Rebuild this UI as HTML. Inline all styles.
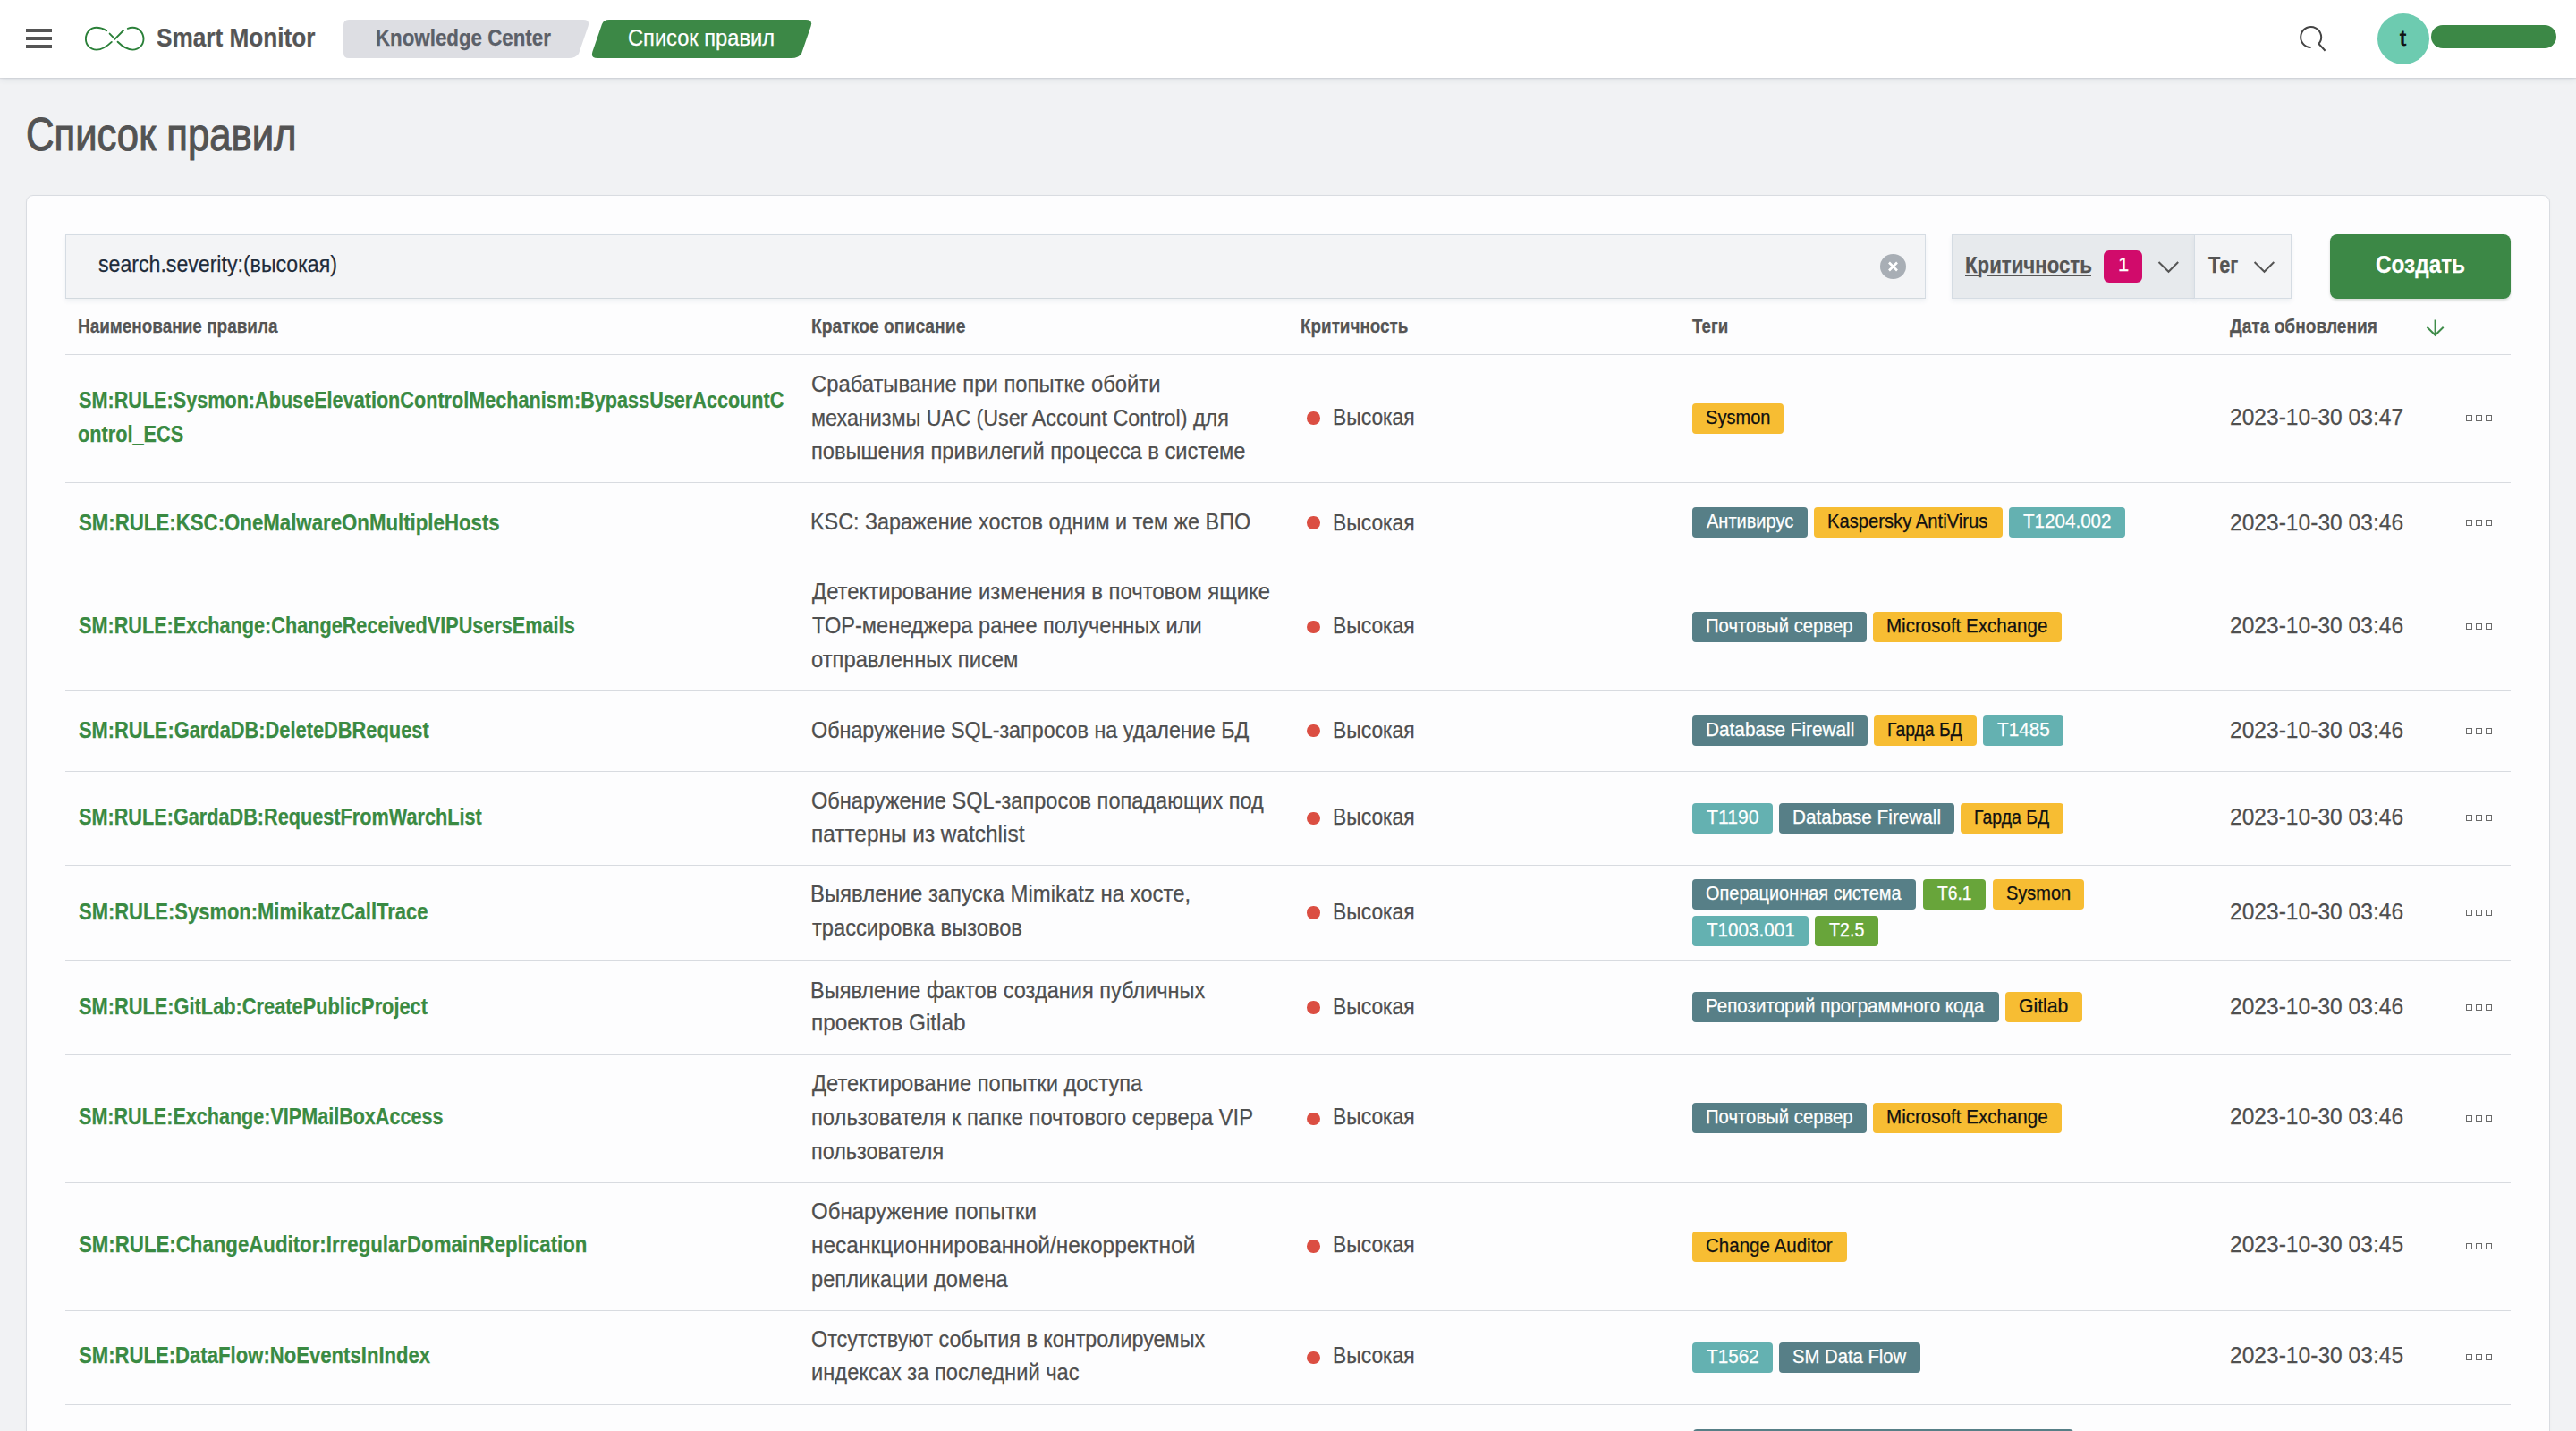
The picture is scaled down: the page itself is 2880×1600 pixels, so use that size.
<!DOCTYPE html>
<html><head><meta charset="utf-8"><title>Список правил</title>
<style>
html,body{margin:0;padding:0;}
body{width:2880px;height:1600px;overflow:hidden;position:relative;background:#f1f2f4;font-family:"Liberation Sans",sans-serif;}
.t{position:absolute;white-space:nowrap;line-height:1;transform-origin:0 0;-webkit-text-stroke:0.25px currentColor;}
.hdr{position:absolute;left:0;top:0;width:2880px;height:87px;background:#fff;box-shadow:0 1px 1px rgba(50,60,80,0.09), 0 2px 6px rgba(60,80,100,0.12);}
.card{position:absolute;left:29px;top:218px;width:2820px;height:1500px;background:#fdfdfe;border:1px solid #d9dce1;border-radius:8px;box-shadow:0 1px 3px rgba(0,0,0,0.03);}
.hl{position:absolute;left:73px;width:2734px;height:1px;background:#d8dbe0;}
.tag{position:absolute;height:34px;border-radius:4px;}
.dot{position:absolute;left:1461px;width:14.5px;height:14.5px;border-radius:50%;background:#db4e42;}
.sq{position:absolute;box-sizing:border-box;width:7px;height:7px;border:1.8px solid #6a6a6a;}
</style></head><body>
<div class="hdr"></div>
<div style="position:absolute;left:29px;top:32px;width:29px;height:4px;background:#555"></div>
<div style="position:absolute;left:29px;top:41px;width:29px;height:4px;background:#555"></div>
<div style="position:absolute;left:29px;top:50px;width:29px;height:4px;background:#555"></div>
<svg style="position:absolute;left:90px;top:25px" width="80" height="37" viewBox="0 0 80 37">
 <g fill="none" stroke="#2b8039" stroke-width="1.9" stroke-linecap="round">
  <path d="M29.2,9.3 C25,6.6 21.5,5.7 18,5.7 C11,5.7 5.9,11.5 5.9,18.6 C5.9,25.5 11,30.6 18,30.6 C25,30.6 30,26.5 34.8,21.9"/>
  <path d="M52.8,6.8 C54.8,6 56.5,5.7 58.4,5.7 C65,5.7 70.5,11.5 70.5,18.6 C70.5,25.5 65,30.6 58.4,30.6 C52,30.6 47.5,27.5 41.6,21.7"/>
  <path d="M32.6,12.6 L38.5,18.6 L48,9"/>
 </g>
</svg>
<svg style="position:absolute;left:370px;top:10px" width="560" height="70" viewBox="0 0 560 70">
 <path d="M20,12 H282 Q290,12 287.5,19.5 L277,50 Q273.5,55 266,55 H20 Q14,55 14,49 V18 Q14,12 20,12 Z" fill="#dddee3"/>
 <path d="M311,12 H531 Q539,12 536.5,19.5 L526,50 Q522.5,55 515,55 H298 Q290,55 292.5,47.5 L303,17 Q305,12 311,12 Z" fill="#3c8846"/>
</svg>
<svg style="position:absolute;left:2560px;top:20px" width="50" height="50" viewBox="0 0 50 50">
 <path d="M23.6,33.0 A11.5,11.5 0 1 1 32.4,29.0 L39.6,36.8" fill="none" stroke="#444" stroke-width="2"/>
</svg>
<div style="position:absolute;left:2658px;top:15px;width:58px;height:57px;border-radius:50%;background:#6dcbb0"></div>
<div style="position:absolute;left:2718px;top:28px;width:140px;height:26px;border-radius:13px;background:#3c8846"></div>
<div class="card"></div>
<div style="position:absolute;left:73px;top:262px;width:2078px;height:70px;background:#f3f4f6;border:1px solid #d5dce3;border-bottom-color:#d2d9de;box-shadow:0 3px 5px rgba(60,90,110,0.07)"></div>
<div style="position:absolute;left:2102px;top:284px;width:29px;height:28px;border-radius:50%;background:#a8aeb5"></div>
<svg style="position:absolute;left:2102px;top:284px" width="29" height="28" viewBox="0 0 29 28"><path d="M10,9.5 L19,18.5 M19,9.5 L10,18.5" stroke="#fff" stroke-width="2.6"/></svg>
<div style="position:absolute;left:2182px;top:262px;width:271px;height:70px;background:#e7eaed;border:1px solid #d5dce3;border-right:none;box-shadow:0 3px 5px rgba(60,90,110,0.07)"></div>
<div style="position:absolute;left:2453px;top:262px;width:107px;height:70px;background:#f3f4f6;border:1px solid #d5dce3;box-shadow:0 3px 5px rgba(60,90,110,0.07)"></div>
<div style="position:absolute;left:2197.4px;top:307px;width:14.4px;height:2px;background:#555"></div><div style="position:absolute;left:2220.5px;top:307px;width:117px;height:2px;background:#555"></div>
<div style="position:absolute;left:2352px;top:280px;width:43px;height:36px;border-radius:6px;background:#d10b6b"></div>
<svg style="position:absolute;left:2410px;top:288px" width="140" height="20" viewBox="0 0 140 20"><path d="M3.5,5 L14.5,15.8 L25.2,5 M110.6,5 L121.5,15.8 L132.3,5" fill="none" stroke="#555" stroke-width="2"/></svg>
<div style="position:absolute;left:2605px;top:262px;width:202px;height:72px;border-radius:8px;background:#3c8846;box-shadow:0 2px 3px rgba(0,40,0,0.15)"></div>
<svg style="position:absolute;left:2705px;top:352px" width="36" height="30" viewBox="0 0 36 30"><path d="M17.6,5.5 V22.8 M8.5,13.8 L17.6,22.8 L26.7,13.8" fill="none" stroke="#3f8c4a" stroke-width="2"/></svg>
<div class="hl" style="top:395.5px"></div><div class="hl" style="top:538.7px"></div><div class="hl" style="top:629.0px"></div><div class="hl" style="top:771.7px"></div><div class="hl" style="top:861.7px"></div><div class="hl" style="top:966.9px"></div><div class="hl" style="top:1072.9px"></div><div class="hl" style="top:1178.9px"></div><div class="hl" style="top:1321.8px"></div><div class="hl" style="top:1464.6px"></div><div class="hl" style="top:1569.9px"></div>
<div class="tag" style="left:1892.1px;top:451.1px;width:101.9px;background:#f7bd33"></div><div class="tag" style="left:1892.0px;top:567.2px;width:128.7px;background:#577f87"></div><div class="tag" style="left:2028.0px;top:567.2px;width:211.0px;background:#f7bd33"></div><div class="tag" style="left:2246.0px;top:567.2px;width:129.8px;background:#64b1b1"></div><div class="tag" style="left:1892.1px;top:684.1px;width:194.8px;background:#577f87"></div><div class="tag" style="left:2094.2px;top:684.1px;width:210.7px;background:#f7bd33"></div><div class="tag" style="left:1892.0px;top:800.2px;width:196.0px;background:#577f87"></div><div class="tag" style="left:2095.2px;top:800.2px;width:114.6px;background:#f7bd33"></div><div class="tag" style="left:2217.0px;top:800.2px;width:90.0px;background:#64b1b1"></div><div class="tag" style="left:1892.1px;top:898.2px;width:89.9px;background:#64b1b1"></div><div class="tag" style="left:1989.0px;top:898.2px;width:195.8px;background:#577f87"></div><div class="tag" style="left:2192.0px;top:898.2px;width:115.0px;background:#f7bd33"></div><div class="tag" style="left:1892.0px;top:983.4px;width:249.8px;background:#577f87"></div><div class="tag" style="left:2150.0px;top:983.4px;width:69.7px;background:#68a53a"></div><div class="tag" style="left:2228.0px;top:983.4px;width:101.7px;background:#f7bd33"></div><div class="tag" style="left:1892.0px;top:1024.3px;width:130.0px;background:#64b1b1"></div><div class="tag" style="left:2029.0px;top:1024.3px;width:70.6px;background:#68a53a"></div><div class="tag" style="left:1892.0px;top:1109.1px;width:342.7px;background:#577f87"></div><div class="tag" style="left:2242.0px;top:1109.1px;width:85.7px;background:#f7bd33"></div><div class="tag" style="left:1892.0px;top:1233.2px;width:195.0px;background:#577f87"></div><div class="tag" style="left:2094.0px;top:1233.2px;width:211.0px;background:#f7bd33"></div><div class="tag" style="left:1892.0px;top:1377.2px;width:173.0px;background:#f7bd33"></div><div class="tag" style="left:1892.0px;top:1501.3px;width:90.0px;background:#64b1b1"></div><div class="tag" style="left:1989.0px;top:1501.3px;width:157.9px;background:#577f87"></div><div class="tag" style="left:1893px;top:1598px;width:425px;background:#577f87"></div>
<div class="dot" style="top:460.3px"></div><div class="sq" style="left:2757px;top:464.1px"></div><div class="sq" style="left:2768px;top:464.1px"></div><div class="sq" style="left:2778.5px;top:464.1px"></div><div class="dot" style="top:577.1px"></div><div class="sq" style="left:2757px;top:580.9px"></div><div class="sq" style="left:2768px;top:580.9px"></div><div class="sq" style="left:2778.5px;top:580.9px"></div><div class="dot" style="top:693.6px"></div><div class="sq" style="left:2757px;top:697.4px"></div><div class="sq" style="left:2768px;top:697.4px"></div><div class="sq" style="left:2778.5px;top:697.4px"></div><div class="dot" style="top:809.9px"></div><div class="sq" style="left:2757px;top:813.7px"></div><div class="sq" style="left:2768px;top:813.7px"></div><div class="sq" style="left:2778.5px;top:813.7px"></div><div class="dot" style="top:907.5px"></div><div class="sq" style="left:2757px;top:911.3px"></div><div class="sq" style="left:2768px;top:911.3px"></div><div class="sq" style="left:2778.5px;top:911.3px"></div><div class="dot" style="top:1013.1px"></div><div class="sq" style="left:2757px;top:1016.9px"></div><div class="sq" style="left:2768px;top:1016.9px"></div><div class="sq" style="left:2778.5px;top:1016.9px"></div><div class="dot" style="top:1119.1px"></div><div class="sq" style="left:2757px;top:1122.9px"></div><div class="sq" style="left:2768px;top:1122.9px"></div><div class="sq" style="left:2778.5px;top:1122.9px"></div><div class="dot" style="top:1243.5px"></div><div class="sq" style="left:2757px;top:1247.3px"></div><div class="sq" style="left:2768px;top:1247.3px"></div><div class="sq" style="left:2778.5px;top:1247.3px"></div><div class="dot" style="top:1386.4px"></div><div class="sq" style="left:2757px;top:1390.2px"></div><div class="sq" style="left:2768px;top:1390.2px"></div><div class="sq" style="left:2778.5px;top:1390.2px"></div><div class="dot" style="top:1510.5px"></div><div class="sq" style="left:2757px;top:1514.2px"></div><div class="sq" style="left:2768px;top:1514.2px"></div><div class="sq" style="left:2778.5px;top:1514.2px"></div>
<div class="t" style="left:175.00px;top:26.61px;font-size:30px;color:#555555;transform:scaleX(0.8730);font-weight:700;">Smart Monitor</div><div class="t" style="left:419.74px;top:28.99px;font-size:26px;color:#5b6069;transform:scaleX(0.8581);font-weight:700;">Knowledge Center</div><div class="t" style="left:702.09px;top:28.59px;font-size:26px;color:#ffffff;transform:scaleX(0.9098);">Список правил</div><div class="t" style="left:28.82px;top:124.28px;font-size:52px;color:#535353;transform:scaleX(0.8394);-webkit-text-stroke:1.1px #535353;">Список правил</div><div class="t" style="left:109.70px;top:282.39px;font-size:26px;color:#1f2c3b;transform:scaleX(0.8893);">search.severity:(высокая)</div><div class="t" style="left:2196.55px;top:282.99px;font-size:26px;color:#555555;transform:scaleX(0.8550);font-weight:700;">Критичность</div><div class="t" style="left:2469.20px;top:282.99px;font-size:26px;color:#555555;transform:scaleX(0.8365);font-weight:700;">Тег</div><div class="t" style="left:2656.13px;top:282.30px;font-size:28px;color:#ffffff;transform:scaleX(0.8689);font-weight:700;">Создать</div><div class="t" style="left:2368.00px;top:285.38px;font-size:22px;color:#ffffff;transform:scaleX(1.0000);">1</div><div class="t" style="left:2682.50px;top:30.68px;font-size:24px;color:#111111;transform:scaleX(1.0500);-webkit-text-stroke:0.8px #111;">t</div><div class="t" style="left:87.24px;top:354.08px;font-size:22px;color:#555555;transform:scaleX(0.8605);font-weight:700;">Наименование правила</div><div class="t" style="left:907.02px;top:354.08px;font-size:22px;color:#555555;transform:scaleX(0.8776);font-weight:700;">Краткое описание</div><div class="t" style="left:1454.14px;top:354.08px;font-size:22px;color:#555555;transform:scaleX(0.8574);font-weight:700;">Критичность</div><div class="t" style="left:1892.20px;top:354.08px;font-size:22px;color:#555555;transform:scaleX(0.8504);font-weight:700;">Теги</div><div class="t" style="left:2493.00px;top:354.08px;font-size:22px;color:#555555;transform:scaleX(0.8705);font-weight:700;">Дата обновления</div><div class="t" style="left:87.70px;top:434.49px;font-size:26px;color:#3a8a42;transform:scaleX(0.8319);font-weight:700;">SM:RULE:Sysmon:AbuseElevationControlMechanism:BypassUserAccountC</div><div class="t" style="left:86.87px;top:471.79px;font-size:26px;color:#3a8a42;transform:scaleX(0.8350);font-weight:700;">ontrol_ECS</div><div class="t" style="left:906.88px;top:415.69px;font-size:26px;color:#4f4f4f;transform:scaleX(0.9153);">Срабатывание при попытке обойти</div><div class="t" style="left:906.90px;top:453.99px;font-size:26px;color:#4f4f4f;transform:scaleX(0.8972);">механизмы UAC (User Account Control) для</div><div class="t" style="left:906.89px;top:490.99px;font-size:26px;color:#4f4f4f;transform:scaleX(0.9109);">повышения привилегий процесса в системе</div><div class="t" style="left:1490.24px;top:453.09px;font-size:26px;color:#4f4f4f;transform:scaleX(0.8796);">Высокая</div><div class="t" style="left:2493.05px;top:453.09px;font-size:26px;color:#4f4f4f;transform:scaleX(0.9454);">2023-10-30 03:47</div><div class="t" style="left:1906.99px;top:455.68px;font-size:22px;color:#111111;transform:scaleX(0.9115);">Sysmon</div><div class="t" style="left:87.70px;top:570.99px;font-size:26px;color:#3a8a42;transform:scaleX(0.8552);font-weight:700;">SM:RULE:KSC:OneMalwareOnMultipleHosts</div><div class="t" style="left:906.00px;top:569.99px;font-size:26px;color:#4f4f4f;transform:scaleX(0.8980);">KSC: Заражение хостов одним и тем же ВПО</div><div class="t" style="left:1490.24px;top:570.69px;font-size:26px;color:#4f4f4f;transform:scaleX(0.8796);">Высокая</div><div class="t" style="left:2493.05px;top:570.69px;font-size:26px;color:#4f4f4f;transform:scaleX(0.9454);">2023-10-30 03:46</div><div class="t" style="left:1907.80px;top:571.78px;font-size:22px;color:#ffffff;transform:scaleX(0.9092);">Антивирус</div><div class="t" style="left:2042.88px;top:571.78px;font-size:22px;color:#111111;transform:scaleX(0.9184);">Kaspersky AntiVirus</div><div class="t" style="left:2261.80px;top:571.78px;font-size:22px;color:#ffffff;transform:scaleX(0.9365);">T1204.002</div><div class="t" style="left:87.70px;top:685.99px;font-size:26px;color:#3a8a42;transform:scaleX(0.8327);font-weight:700;">SM:RULE:Exchange:ChangeReceivedVIPUsersEmails</div><div class="t" style="left:907.80px;top:648.09px;font-size:26px;color:#4f4f4f;transform:scaleX(0.9169);">Детектирование изменения в почтовом ящике</div><div class="t" style="left:907.80px;top:685.59px;font-size:26px;color:#4f4f4f;transform:scaleX(0.9060);">TOP-менеджера ранее полученных или</div><div class="t" style="left:906.89px;top:723.99px;font-size:26px;color:#4f4f4f;transform:scaleX(0.9139);">отправленных писем</div><div class="t" style="left:1490.24px;top:685.99px;font-size:26px;color:#4f4f4f;transform:scaleX(0.8796);">Высокая</div><div class="t" style="left:2493.05px;top:685.99px;font-size:26px;color:#4f4f4f;transform:scaleX(0.9454);">2023-10-30 03:46</div><div class="t" style="left:1906.98px;top:688.68px;font-size:22px;color:#ffffff;transform:scaleX(0.9219);">Почтовый сервер</div><div class="t" style="left:2109.07px;top:688.68px;font-size:22px;color:#111111;transform:scaleX(0.9335);">Microsoft Exchange</div><div class="t" style="left:87.70px;top:802.99px;font-size:26px;color:#3a8a42;transform:scaleX(0.8395);font-weight:700;">SM:RULE:GardaDB:DeleteDBRequest</div><div class="t" style="left:906.90px;top:802.99px;font-size:26px;color:#4f4f4f;transform:scaleX(0.8973);">Обнаружение SQL-запросов на удаление БД</div><div class="t" style="left:1490.24px;top:802.99px;font-size:26px;color:#4f4f4f;transform:scaleX(0.8796);">Высокая</div><div class="t" style="left:2493.05px;top:802.99px;font-size:26px;color:#4f4f4f;transform:scaleX(0.9454);">2023-10-30 03:46</div><div class="t" style="left:1906.86px;top:804.78px;font-size:22px;color:#ffffff;transform:scaleX(0.9444);">Database Firewall</div><div class="t" style="left:2110.12px;top:804.78px;font-size:22px;color:#111111;transform:scaleX(0.8816);">Гарда БД</div><div class="t" style="left:2232.80px;top:804.78px;font-size:22px;color:#ffffff;transform:scaleX(0.9414);">T1485</div><div class="t" style="left:87.70px;top:899.99px;font-size:26px;color:#3a8a42;transform:scaleX(0.8335);font-weight:700;">SM:RULE:GardaDB:RequestFromWarchList</div><div class="t" style="left:906.89px;top:881.79px;font-size:26px;color:#4f4f4f;transform:scaleX(0.9063);">Обнаружение SQL-запросов попадающих под</div><div class="t" style="left:906.86px;top:918.69px;font-size:26px;color:#4f4f4f;transform:scaleX(0.9385);">паттерны из watchlist</div><div class="t" style="left:1490.24px;top:899.99px;font-size:26px;color:#4f4f4f;transform:scaleX(0.8796);">Высокая</div><div class="t" style="left:2493.05px;top:899.99px;font-size:26px;color:#4f4f4f;transform:scaleX(0.9454);">2023-10-30 03:46</div><div class="t" style="left:1907.90px;top:902.78px;font-size:22px;color:#ffffff;transform:scaleX(0.9651);">T1190</div><div class="t" style="left:2003.86px;top:902.78px;font-size:22px;color:#ffffff;transform:scaleX(0.9432);">Database Firewall</div><div class="t" style="left:2206.91px;top:902.78px;font-size:22px;color:#111111;transform:scaleX(0.8858);">Гарда БД</div><div class="t" style="left:87.70px;top:1005.99px;font-size:26px;color:#3a8a42;transform:scaleX(0.8444);font-weight:700;">SM:RULE:Sysmon:MimikatzCallTrace</div><div class="t" style="left:905.96px;top:986.29px;font-size:26px;color:#4f4f4f;transform:scaleX(0.9189);">Выявление запуска Mimikatz на хосте,</div><div class="t" style="left:907.80px;top:1023.79px;font-size:26px;color:#4f4f4f;transform:scaleX(0.9103);">трассировка вызовов</div><div class="t" style="left:1490.24px;top:1005.99px;font-size:26px;color:#4f4f4f;transform:scaleX(0.8796);">Высокая</div><div class="t" style="left:2493.05px;top:1005.99px;font-size:26px;color:#4f4f4f;transform:scaleX(0.9454);">2023-10-30 03:46</div><div class="t" style="left:1906.89px;top:987.98px;font-size:22px;color:#ffffff;transform:scaleX(0.9062);">Операционная система</div><div class="t" style="left:2165.80px;top:987.98px;font-size:22px;color:#ffffff;transform:scaleX(0.8724);">T6.1</div><div class="t" style="left:2242.89px;top:987.98px;font-size:22px;color:#111111;transform:scaleX(0.9089);">Sysmon</div><div class="t" style="left:1907.80px;top:1028.88px;font-size:22px;color:#ffffff;transform:scaleX(0.9384);">T1003.001</div><div class="t" style="left:2044.80px;top:1028.88px;font-size:22px;color:#ffffff;transform:scaleX(0.8930);">T2.5</div><div class="t" style="left:87.70px;top:1111.99px;font-size:26px;color:#3a8a42;transform:scaleX(0.8384);font-weight:700;">SM:RULE:GitLab:CreatePublicProject</div><div class="t" style="left:905.99px;top:1093.59px;font-size:26px;color:#4f4f4f;transform:scaleX(0.9059);">Выявление фактов создания публичных</div><div class="t" style="left:906.86px;top:1129.99px;font-size:26px;color:#4f4f4f;transform:scaleX(0.9371);">проектов Gitlab</div><div class="t" style="left:1490.24px;top:1111.99px;font-size:26px;color:#4f4f4f;transform:scaleX(0.8796);">Высокая</div><div class="t" style="left:2493.05px;top:1111.99px;font-size:26px;color:#4f4f4f;transform:scaleX(0.9454);">2023-10-30 03:46</div><div class="t" style="left:1906.87px;top:1113.68px;font-size:22px;color:#ffffff;transform:scaleX(0.9343);">Репозиторий программного кода</div><div class="t" style="left:2256.84px;top:1113.68px;font-size:22px;color:#111111;transform:scaleX(0.9638);">Gitlab</div><div class="t" style="left:87.70px;top:1235.39px;font-size:26px;color:#3a8a42;transform:scaleX(0.8293);font-weight:700;">SM:RULE:Exchange:VIPMailBoxAccess</div><div class="t" style="left:907.80px;top:1197.69px;font-size:26px;color:#4f4f4f;transform:scaleX(0.9104);">Детектирование попытки доступа</div><div class="t" style="left:906.89px;top:1235.79px;font-size:26px;color:#4f4f4f;transform:scaleX(0.9140);">пользователя к папке почтового сервера VIP</div><div class="t" style="left:906.90px;top:1273.59px;font-size:26px;color:#4f4f4f;transform:scaleX(0.8993);">пользователя</div><div class="t" style="left:1490.24px;top:1235.39px;font-size:26px;color:#4f4f4f;transform:scaleX(0.8796);">Высокая</div><div class="t" style="left:2493.05px;top:1235.39px;font-size:26px;color:#4f4f4f;transform:scaleX(0.9454);">2023-10-30 03:46</div><div class="t" style="left:1906.88px;top:1237.78px;font-size:22px;color:#ffffff;transform:scaleX(0.9230);">Почтовый сервер</div><div class="t" style="left:2108.86px;top:1237.78px;font-size:22px;color:#111111;transform:scaleX(0.9351);">Microsoft Exchange</div><div class="t" style="left:87.70px;top:1378.49px;font-size:26px;color:#3a8a42;transform:scaleX(0.8555);font-weight:700;">SM:RULE:ChangeAuditor:IrregularDomainReplication</div><div class="t" style="left:906.88px;top:1341.39px;font-size:26px;color:#4f4f4f;transform:scaleX(0.9227);">Обнаружение попытки</div><div class="t" style="left:906.86px;top:1379.49px;font-size:26px;color:#4f4f4f;transform:scaleX(0.9412);">несанкционнированной/некорректной</div><div class="t" style="left:906.89px;top:1416.99px;font-size:26px;color:#4f4f4f;transform:scaleX(0.9111);">репликации домена</div><div class="t" style="left:1490.24px;top:1378.49px;font-size:26px;color:#4f4f4f;transform:scaleX(0.8796);">Высокая</div><div class="t" style="left:2493.05px;top:1378.49px;font-size:26px;color:#4f4f4f;transform:scaleX(0.9454);">2023-10-30 03:45</div><div class="t" style="left:1906.87px;top:1381.78px;font-size:22px;color:#111111;transform:scaleX(0.9336);">Change Auditor</div><div class="t" style="left:87.70px;top:1501.79px;font-size:26px;color:#3a8a42;transform:scaleX(0.8505);font-weight:700;">SM:RULE:DataFlow:NoEventsInIndex</div><div class="t" style="left:906.90px;top:1483.59px;font-size:26px;color:#4f4f4f;transform:scaleX(0.8980);">Отсутствуют события в контролируемых</div><div class="t" style="left:906.89px;top:1521.39px;font-size:26px;color:#4f4f4f;transform:scaleX(0.9110);">индексах за последний час</div><div class="t" style="left:1490.24px;top:1501.79px;font-size:26px;color:#4f4f4f;transform:scaleX(0.8796);">Высокая</div><div class="t" style="left:2493.05px;top:1501.79px;font-size:26px;color:#4f4f4f;transform:scaleX(0.9454);">2023-10-30 03:45</div><div class="t" style="left:1907.80px;top:1505.88px;font-size:22px;color:#ffffff;transform:scaleX(0.9414);">T1562</div><div class="t" style="left:2003.88px;top:1505.88px;font-size:22px;color:#ffffff;transform:scaleX(0.9209);">SM Data Flow</div>
</body></html>
